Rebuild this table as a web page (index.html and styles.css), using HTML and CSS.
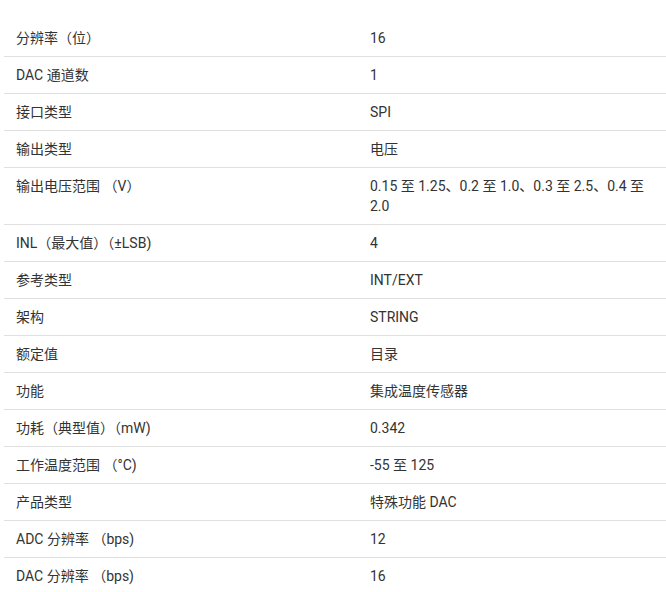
FILE: index.html
```html
<!DOCTYPE html>
<html lang="zh">
<head>
<meta charset="utf-8">
<link rel="stylesheet" href="styles.css">
</head>
<body>
<table class="spec">
<tbody>
<tr class="first"><td class="k">分辨率（位）</td><td class="v">16</td></tr>
<tr><td class="k">DAC 通道数</td><td class="v">1</td></tr>
<tr><td class="k">接口类型</td><td class="v">SPI</td></tr>
<tr><td class="k">输出类型</td><td class="v">电压</td></tr>
<tr><td class="k">输出电压范围 （V）</td><td class="v">0.15 至 1.25、0.2 至 1.0、0.3 至 2.5、0.4 至 2.0</td></tr>
<tr><td class="k">INL（最大值）（±LSB)</td><td class="v">4</td></tr>
<tr><td class="k">参考类型</td><td class="v">INT/EXT</td></tr>
<tr><td class="k">架构</td><td class="v">STRING</td></tr>
<tr><td class="k">额定值</td><td class="v">目录</td></tr>
<tr><td class="k">功能</td><td class="v">集成温度传感器</td></tr>
<tr><td class="k">功耗（典型值）（mW)</td><td class="v">0.342</td></tr>
<tr><td class="k">工作温度范围 （°C)</td><td class="v">-55 至 125</td></tr>
<tr><td class="k">产品类型</td><td class="v">特殊功能 DAC</td></tr>
<tr><td class="k">ADC 分辨率 （bps)</td><td class="v">12</td></tr>
<tr><td class="k">DAC 分辨率 （bps)</td><td class="v">16</td></tr>
</tbody>
</table>
</body>
</html>
```
FILE: styles.css
```css
html, body {
  margin: 0;
  padding: 0;
  background: #ffffff;
}
body {
  padding: 20px 0 0 4px;
  font-family: Roboto, "Noto Sans CJK SC", sans-serif;
  font-size: 14px;
  line-height: 20px;
  color: #333333;
}
.spec {
  border-collapse: collapse;
  width: 662px;
  table-layout: fixed;
}
.spec td {
  padding: 8px 12px;
  vertical-align: top;
  border-top: 1px solid #e0e0e0;
}
.spec tr.first td {
  border-top: none;
}
.spec td.k {
  width: 330px;
}
.spec td.v {
  width: 284px;
}
```
